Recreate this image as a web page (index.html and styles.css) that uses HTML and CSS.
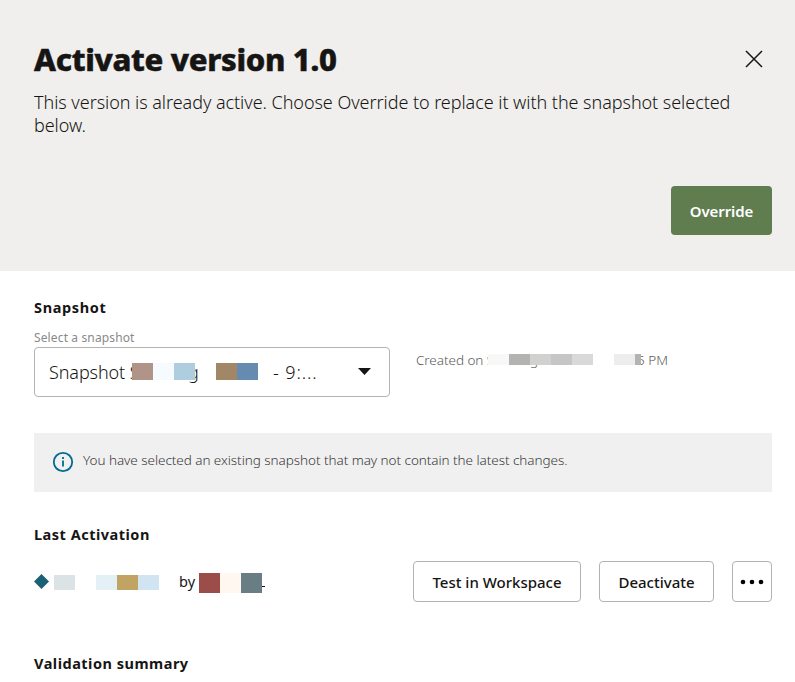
FILE: index.html
```html
<!DOCTYPE html>
<html lang="en">
<head>
<meta charset="utf-8">
<title>Activate version 1.0</title>
<link rel="stylesheet" href="styles.css">
</head>
<body>
<header class="header">
  <div class="title-row">
    <h1><span>Activate version 1.0</span></h1>
    <button class="close" aria-label="Close"><svg width="18" height="18" viewBox="0 0 18 18"><path d="M1 1 17 17M17 1 1 17"/></svg></button>
  </div>
  <p class="intro"><span>This version is already active. Choose Override to replace it with the snapshot selected</span><br><span>below.</span></p>
  <div class="header-actions"><button class="primary"><span>Override</span></button></div>
</header>
<main>
  <section class="snapshot">
    <h2><span class="h-snapshot">Snapshot</span></h2>
    <div class="snapshot-row">
      <div class="field">
        <div class="label"><span>Select a snapshot</span></div>
        <div class="select">
          <span class="select-name">Snapshot S</span><span class="select-g">g</span><span class="select-time">- 9:...</span>
          <svg class="caret" width="13" height="7" viewBox="0 0 13 7"><path d="M0 0h13L6.5 7z"/></svg>
          <div class="mask mask-name"><i></i><i></i><i></i></div>
          <div class="mask mask-date"><i></i><i></i></div>
        </div>
      </div>
      <div class="created">
        <span class="created-on">Created on S</span><span class="created-g">g</span><span class="created-time">5 PM</span>
        <div class="mask mask-created"><i></i><i></i><i></i><i></i><i></i></div>
        <div class="mask mask-hour"><i></i><i></i></div>
      </div>
    </div>
  </section>
  <div class="info">
    <svg width="22" height="22" viewBox="0 0 22 22"><circle cx="11" cy="11" r="9.2"/><path d="M11 9.5v6M11 6v2"/></svg>
    <span>You have selected an existing snapshot that may not contain the latest changes.</span>
  </div>
  <section class="activation">
    <h2><span class="h-activation">Last Activation</span></h2>
    <div class="activation-row">
      <svg class="diamond" width="16" height="16" viewBox="0 0 16 16"><path d="M7.5 0 15 7.5 7.5 15 0 7.5z"/></svg>
      <div class="bar bar-version"><i></i></div>
      <div class="bar bar-date"><i></i><i></i><i></i></div>
      <span class="by">by</span>
      <div class="bar bar-user"><i></i><i></i><i></i></div>
      <span class="tail"></span>
      <div class="actions">
        <button class="btn test"><span>Test in Workspace</span></button>
        <button class="btn deactivate"><span>Deactivate</span></button>
        <button class="btn more" aria-label="More"><svg width="24" height="6" viewBox="0 0 24 6"><circle cx="3" cy="3" r="2.3"/><circle cx="12" cy="3" r="2.3"/><circle cx="21" cy="3" r="2.3"/></svg></button>
      </div>
    </div>
  </section>
  <h2><span class="h-validation">Validation summary</span></h2>
</main>
</body>
</html>
```
FILE: styles.css
```css
* { box-sizing: border-box; }
body { margin: 0; height: 682px; overflow: hidden; background: #fff; color: #161513; font-family: "Noto Sans", "Open Sans", sans-serif; }
h1, h2, p { margin: 0; }
button { font-family: inherit; color: inherit; margin: 0; padding: 0; }
span { white-space: nowrap; }
svg { display: block; flex: none; }

.header { height: 271px; padding: 39px 23px 0 34px; background: #f0efed; }
.title-row { display: flex; justify-content: space-between; height: 52px; }
h1 { font-size: 31px; line-height: 40px; font-weight: 800; letter-spacing: -0.32px; -webkit-text-stroke: .5px #161513; }
.close { width: 36px; height: 40px; border: 0; background: none; display: flex; align-items: center; justify-content: center; }
.close path { stroke: #161513; stroke-width: 1.5; fill: none; }
.intro { font-size: 18px; line-height: 23px; font-weight: 300; height: 95px; letter-spacing: -0.05px; }
.header-actions { display: flex; justify-content: flex-end; }
.primary { width: 101px; height: 49px; border: 0; border-radius: 4px; background: #5f7d4f; color: #fff; font-size: 15px; font-weight: 600; line-height: 51px; letter-spacing: -.1px; }

main { padding: 26px 23px 0 34px; }
h2 { font-size: 14.5px; line-height: 20px; font-weight: 700; letter-spacing: .5px; }
.h-snapshot { letter-spacing: .65px; }
.snapshot { height: 136px; }
.snapshot-row { display: flex; gap: 26px; padding-top: 13px; }
.field { width: 356px; }
.label { font-size: 12px; line-height: 16px; height: 17px; color: #8a8988; letter-spacing: .13px; }
.select { position: relative; display: flex; align-items: center; height: 50px; padding-left: 14px; border: 1px solid #b3b2b1; border-radius: 4px; font-size: 18px; font-weight: 300; }
.select-name { width: 87px; letter-spacing: -.1px; }
.select-g { width: 10px; margin-left: 52px; }
.select-time { margin-left: 75px; letter-spacing: .9px; }
.caret { position: absolute; left: 323px; top: 20px; fill: #161513; }
.mask { position: absolute; display: flex; }
.mask i, .bar i { display: block; width: 21px; height: 100%; }
.mask-name { left: 97px; top: 15px; height: 17px; }
.mask-name i:nth-child(1) { background: #b09488; }
.mask-name i:nth-child(2) { background: #f5fbff; }
.mask-name i:nth-child(3) { background: #aecddf; }
.mask-date { left: 181px; top: 15px; height: 17px; }
.mask-date i:nth-child(1) { background: #a28767; }
.mask-date i:nth-child(2) { background: #668bb0; }
.created { position: relative; display: flex; height: 20px; margin-top: 20px; font-size: 13.5px; line-height: 20px; font-weight: 300; color: #5b5a59; }
.created-on { width: 72px; letter-spacing: -.05px; }
.created-g { width: 8px; margin-left: 42px; }
.created-time { margin-left: 99px; }
.mask-created { left: 72px; top: 4px; height: 11px; }
.mask-created i:nth-child(1) { background: #f8f8f8; }
.mask-created i:nth-child(2) { background: #b3b3b2; }
.mask-created i:nth-child(3) { background: #d1d1d0; }
.mask-created i:nth-child(4) { background: #c6c6c6; }
.mask-created i:nth-child(5) { background: #d9d9d9; }
.mask-hour { left: 198px; top: 4px; height: 11px; }
.mask-hour i:nth-child(1) { background: #ededed; }
.mask-hour i:nth-child(2) { width: 6px; background: #b3b3b2; }

.info { display: flex; height: 59px; padding: 18px 0 0 18px; gap: 9px; background: #f0f0f0; }
.info svg { fill: none; stroke: #006b8f; stroke-width: 1.8; }
.info span { font-size: 13.5px; line-height: 18px; font-weight: 300; color: #3a3938; letter-spacing: -.05px; }
.activation { height: 161px; padding-top: 32px; }
.activation-row { display: flex; height: 41px; margin-top: 17px; align-items: center; }
.diamond { fill: #1b6074; }
.bar { display: flex; height: 15px; }
.bar-version { margin-left: 4px; margin-top: 2px; }
.bar-version i { background: #dbe3e6; }
.bar-date { margin: 2px 0 0 21px; }
.bar-date i:nth-child(1) { background: #e3f1f7; }
.bar-date i:nth-child(2) { background: #c1a463; }
.bar-date i:nth-child(3) { background: #d0e4f2; }
.by { width: 20px; margin: -2px 0 0 20px; font-size: 14.5px; }
.bar-user { height: 20px; margin-top: 2px; }
.bar-user i:nth-child(1) { background: #9b4d49; }
.bar-user i:nth-child(2) { background: #fff7f0; }
.bar-user i:nth-child(3) { background: #697d84; }
.tail { width: 3px; height: 1px; margin-top: 9px; background: #161513; }
.actions { display: flex; gap: 18px; margin-left: auto; }
.btn { height: 41px; border: 1px solid #b3b2b1; border-radius: 4px; background: #fff; font-size: 15px; line-height: 41px; font-weight: 500; }
.test { width: 168px; }
.deactivate { width: 115px; }
.more { width: 40px; display: flex; align-items: center; justify-content: center; }
```
